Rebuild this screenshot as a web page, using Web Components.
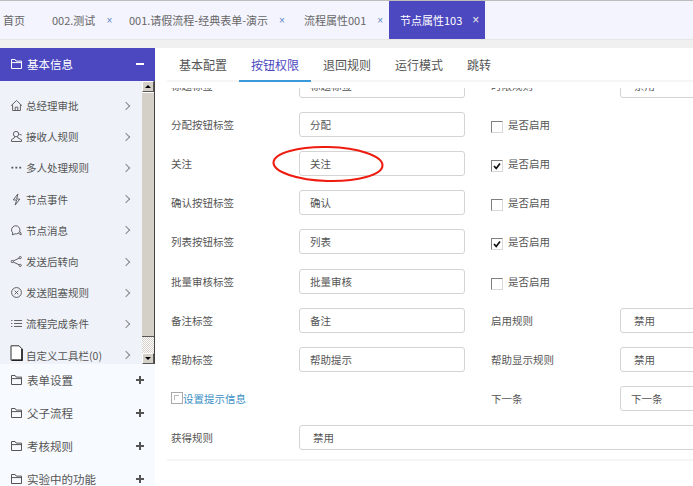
<!DOCTYPE html>
<html lang="zh">
<head>
<meta charset="utf-8">
<title>节点属性</title>
<style>
  html, body { margin: 0; height: 100%; overflow: hidden; background: #fff; }
  body { font-family: "Noto Sans CJK SC", "Liberation Sans", sans-serif; font-size: 10.5px; color: #555; }
</style>
</head>
<body>
<app-shell>
  <top-tabs slot="top">
    <top-tab width="52" pad="3">首页</top-tab>
    <top-tab width="77" closable>002.测试</top-tab>
    <top-tab width="175" closable>001.请假流程-经典表单-演示</top-tab>
    <top-tab width="85" closable>流程属性001</top-tab>
    <top-tab width="96" pad="11" closable active>节点属性103</top-tab>
  </top-tabs>

  <side-nav slot="side">
    <nav-group open label="基本信息">
      <nav-item icon="home">总经理审批</nav-item>
      <nav-item icon="user">接收人规则</nav-item>
      <nav-item icon="dots">多人处理规则</nav-item>
      <nav-item icon="bolt">节点事件</nav-item>
      <nav-item icon="chat">节点消息</nav-item>
      <nav-item icon="share">发送后转向</nav-item>
      <nav-item icon="cancel">发送阻塞规则</nav-item>
      <nav-item icon="list">流程完成条件</nav-item>
      <nav-item icon="doc">自定义工具栏(0)</nav-item>
    </nav-group>
    <nav-group label="表单设置"></nav-group>
    <nav-group label="父子流程"></nav-group>
    <nav-group label="考核规则"></nav-group>
    <nav-group label="实验中的功能"></nav-group>
  </side-nav>

  <main-panel slot="main">
    <form-row label="标题标签" value="标题标签" label2="时限规则" select="禁用"></form-row>
    <form-row label="分配按钮标签" value="分配" check="off"></form-row>
    <form-row label="关注" value="关注" check="on"></form-row>
    <form-row label="确认按钮标签" value="确认" check="off"></form-row>
    <form-row label="列表按钮标签" value="列表" check="on"></form-row>
    <form-row label="批量审核标签" value="批量审核" check="off"></form-row>
    <form-row label="备注标签" value="备注" label2="启用规则" select="禁用"></form-row>
    <form-row label="帮助标签" value="帮助提示" label2="帮助显示规则" select="禁用"></form-row>
    <form-row link="设置提示信息" label2="下一条" select="下一条" tight></form-row>
    <form-row label="获得规则" wide="禁用"></form-row>
  </main-panel>
</app-shell>

<script>
const PURPLE = '#4c48bf';

// icons for the side menu, all in a 14x14 box
const ICONS = {
  home: '<path d="M1.2 7.2 7 1.6l5.8 5.6M2.8 6v6.4h8.4V6M5.6 12.4V8.8h2.8v3.6"/>',
  user: '<circle cx="6.5" cy="4.4" r="2.9"/><path d="M5 7.2 4.6 8.6 1.6 10.4v2h10.8v-1.9L8.6 8.6 8 7.2M10 4.5l2.6 1"/>',
  dots: '<path d="M1.5 7.2h2M5.8 7.2h2M10 7.2h2" stroke-width="2"/>',
  bolt: '<path d="M8.5 1 3.5 7.5h3.6L5.6 13l5-6.5H7.2z"/>',
  chat: '<path d="M3 9.6A4.5 4.5 0 1 1 9 9.9"/><path d="M3 9.6l-.4 2.2L5.2 10.6A4.6 4.6 0 0 0 9 9.9"/><path d="M9 9.9 12 11.8 11.4 8.4"/>',
  share: '<circle cx="11" cy="2.8" r="1.2"/><circle cx="2.4" cy="7" r="1.2"/><circle cx="11" cy="11.2" r="1.2"/><path d="M3.5 6.4 9.9 3.4M3.5 7.6l6.4 3"/>',
  cancel: '<circle cx="7" cy="7" r="5.3"/><path d="M5 5l4 4M9 5 5 9"/>',
  list: '<path d="M1.2 3.8h1.4M1.2 7h1.4M1.2 10.2h1.4M4.4 3.8h8.6M4.4 7h8.6M4.4 10.2h8.6"/>'
};

class AppShell extends HTMLElement {
  constructor() {
    super();
    this.attachShadow({ mode: 'open' }).innerHTML = `
      <style>
        :host { display: grid; grid-template-columns: 155px 538px; grid-template-rows: 40px 438px; row-gap: 8px;
          width: 693px; height: 486px; overflow: hidden; background: #f0f0f0; }
        .top { grid-column: 1 / 3; }
      </style>
      <div class="top"><slot name="top"></slot></div>
      <slot name="side"></slot>
      <slot name="main"></slot>`;
  }
}

class TopTabs extends HTMLElement {
  constructor() {
    super();
    this.attachShadow({ mode: 'open' }).innerHTML = `
      <style>
        :host { display: flex; height: 40px; box-sizing: border-box; background: #f4f4fe;
          border-top: 1px solid #bdbdbd; border-bottom: 1px solid #e6e6e6; }
      </style>
      <slot></slot>`;
  }
}

class TopTab extends HTMLElement {
  constructor() {
    super();
    const pad = this.getAttribute('pad') || '0';
    const closable = this.hasAttribute('closable');
    const active = this.hasAttribute('active');
    this.attachShadow({ mode: 'open' }).innerHTML = `
      <style>
        :host { display: flex; align-items: center; box-sizing: border-box; width: ${this.getAttribute('width')}px;
          padding-left: ${pad}px; font-size: 11px; white-space: nowrap; color: ${active ? '#fff' : '#666'};
          background: ${active ? PURPLE : 'transparent'}; }
        .x { margin-left: ${active ? 10 : 11}px; font: ${active ? 12 : 10}px "Liberation Sans", sans-serif;
          color: ${active ? '#eee' : '#5d86c4'}; }
      </style>
      <slot></slot>${closable ? '<span class="x">×</span>' : ''}`;
  }
}

class SideNav extends HTMLElement {
  constructor() {
    super();
    this.attachShadow({ mode: 'open' }).innerHTML = `
      <style>
        :host { display: block; overflow: hidden; background: #f7faff; }
      </style>
      <slot></slot>`;
  }
}

class NavGroup extends HTMLElement {
  constructor() {
    super();
    const open = this.hasAttribute('open');
    this.attachShadow({ mode: 'open' }).innerHTML = `
      <style>
        :host { display: block; }
        .head { display: flex; align-items: center; box-sizing: border-box; padding: 0 11px 2px 11px;
          height: 33px; color: ${open ? '#fff' : '#555'}; background: ${open ? PURPLE : 'transparent'};
          font-size: 11.5px; }
        svg { width: 11px; height: 10px; margin-right: 5px; fill: none; stroke: currentColor; stroke-width: 1; }
        .name { flex: 1; }
        .sign { position: relative; width: 8px; height: 8px; }
        .sign::before { content: ""; position: absolute; left: 0; right: 0; top: 3px; height: 2px; background: currentColor; }
        .plus::after { content: ""; position: absolute; top: 0; bottom: 0; left: 3px; width: 2px; background: currentColor; }
        .body { display: ${open ? 'flex' : 'none'}; height: 283px; background: #eff3f9; }
        .items { flex: 1; min-width: 0; padding-top: 9px; overflow: hidden; }
        .bar { width: 12px; display: flex; flex-direction: column; background: #d4d0c8;
          border-right: 1px solid #444; box-sizing: content-box; }
        .btn { height: 11px; box-sizing: border-box; background: #d4d0c8; display: flex; align-items: center; justify-content: center;
          border: 1px solid; border-color: #fff #555 #555 #fff; }
        .btn i { width: 0; height: 0; border: 3px solid transparent; }
        .up i { border-bottom-color: #000; border-top: 0; }
        .down i { border-top-color: #000; border-bottom: 0; }
        .thumb { height: 245px; box-sizing: border-box; background: #d4d0c8; border-top: 1px solid #fff; border-bottom: 1px solid #555; }
        .track { flex: 1; background: repeating-conic-gradient(#d4d0c8 0 25%, #fff 0 50%) 0 0 / 2px 2px; }
      </style>
      <div class="head">
        <svg viewBox="0 0 11 10"><path d="M.5 9.5V.5h3.6l1 1.6h5.4v7.4zM.5 3.6h10"/></svg>
        <span class="name">${this.getAttribute('label')}</span>
        <span class="sign ${open ? '' : 'plus'}"></span>
      </div>
      <div class="body">
        <div class="items"><slot></slot></div>
        <div class="bar">
          <div class="btn up"><i></i></div>
          <div class="thumb"></div>
          <div class="track"></div>
          <div class="btn down"><i></i></div>
        </div>
      </div>`;
  }
}

class NavItem extends HTMLElement {
  constructor() {
    super();
    const icon = this.getAttribute('icon');
    const glyph = icon === 'doc'
      ? `<svg class="doc" viewBox="0 0 13 16"><path d="M1 .8h8l3 3v11.4H1z" fill="#fff" stroke="#333"/><path d="M12 4v11.4H2" stroke="#222" stroke-width="1.6"/></svg>`
      : `<svg viewBox="0 0 14 14">${ICONS[icon]}</svg>`;
    this.attachShadow({ mode: 'open' }).innerHTML = `
      <style>
        :host { display: flex; align-items: center; height: 31.2px; padding-left: 10px; color: #555; white-space: nowrap; }
        svg { width: 13px; height: 13px; margin-right: 3px; fill: none; stroke: #555; stroke-width: 1; flex: none; }
        svg.doc { width: 13px; height: 16px; margin-top: -5px; }
        .label { flex: 1; }
        .arrow { width: 5px; height: 5px; margin-right: 13px; border: solid #888; border-width: 1px 1px 0 0; transform: rotate(45deg); }
      </style>
      ${glyph}<span class="label"><slot></slot></span><span class="arrow"></span>`;
  }
}

class MainPanel extends HTMLElement {
  constructor() {
    super();
    const tabs = ['基本配置', '按钮权限', '退回规则', '运行模式', '跳转'];
    this.attachShadow({ mode: 'open' }).innerHTML = `
      <style>
        :host { display: block; position: relative; background: #fff; overflow: hidden; }
        nav { display: flex; height: 34px; margin: 0 0 6px 12px; box-sizing: border-box; border-bottom: 2px solid #f6f6f6; }
        nav a { box-sizing: border-box; height: 34px; padding: 8px 12px 0; font-size: 12px; color: #555; }
        nav a.on { color: ${PURPLE}; border-bottom: 2px solid #3a9ad9; }
        .scroll { height: 371px; margin-left: 12px; overflow: hidden; border-bottom: 2px solid #f6f6f6; }
        .rows { margin-top: -22px; padding-left: 4px; }
        svg { position: absolute; left: 117px; top: 97px; width: 112px; height: 38px; overflow: visible; }
      </style>
      <nav>${tabs.map((t, i) => `<a class="${i === 1 ? 'on' : ''}">${t}</a>`).join('')}</nav>
      <div class="scroll"><div class="rows"><slot></slot></div></div>
      <svg viewBox="0 0 112 38"><ellipse cx="56" cy="19" rx="54.5" ry="17" transform="rotate(1.5 56 19)" fill="none" stroke="#ee1c10" stroke-width="2.1"/></svg>`;
  }
}

class FormRow extends HTMLElement {
  constructor() {
    super();
    const a = (n) => this.getAttribute(n);
    let first = `<span>${a('label') || ''}</span>`;
    if (a('link')) {
      first = `<span class="link"><i class="chk small"></i>${a('link')}</span>`;
    }
    let cells = first;
    if (a('wide')) {
      cells += `<div class="box wide">${a('wide')}</div>`;
    } else {
      cells += a('value') ? `<div class="box">${a('value')}</div>` : '<span></span>';
      cells += '<span></span>';
      if (a('check')) {
        cells += `<span class="check"><i class="chk ${a('check')}">${a('check') === 'on' ? '<svg viewBox="0 0 10 10"><path d="M2 5l2.2 2.4L8 2.5" fill="none" stroke="#111" stroke-width="1.7"/></svg>' : ''}</i>是否启用</span>`;
      } else {
        cells += `<span>${a('label2')}</span><div class="box sel ${this.hasAttribute('tight') ? 'tight' : ''}">${a('select')}</div>`;
      }
    }
    this.attachShadow({ mode: 'open' }).innerHTML = `
      <style>
        :host { display: grid; grid-template-columns: 128px 166px 26px 129px 100px; align-items: center; height: 39.1px; white-space: nowrap; color: #555; }
        .box { box-sizing: border-box; height: 25px; line-height: 23px; padding-left: 10px; background: #fff;
          border: 1px solid #d4d4d4; border-radius: 3px; }
        .wide { grid-column: 2 / 6; padding-left: 13px; }
        .sel { padding-left: 13px; }
        .sel.tight { padding-left: 10px; }
        .check { display: flex; align-items: center; grid-column: 4 / 6; }
        .chk { display: inline-flex; box-sizing: border-box; width: 12px; height: 12px; margin: 5px 5px 0 0; background: #fff;
          border: 1px solid; border-color: #808080 #d8d8d8 #d8d8d8 #808080; }
        .chk svg { width: 100%; height: 100%; }
        .link { display: flex; align-items: center; color: #3b8fc4; }
        .chk.small { margin: 0; border-color: #aaa; position: relative; }
        .chk.small::after { content: ""; position: absolute; left: 2px; top: 2px; width: 4px; height: 4px; border: solid #bbb; border-width: 1px 0 0 1px; }
      </style>
      ${cells}`;
  }
}

customElements.define('app-shell', AppShell);
customElements.define('top-tabs', TopTabs);
customElements.define('top-tab', TopTab);
customElements.define('side-nav', SideNav);
customElements.define('nav-group', NavGroup);
customElements.define('nav-item', NavItem);
customElements.define('main-panel', MainPanel);
customElements.define('form-row', FormRow);
</script>
</body>
</html>
